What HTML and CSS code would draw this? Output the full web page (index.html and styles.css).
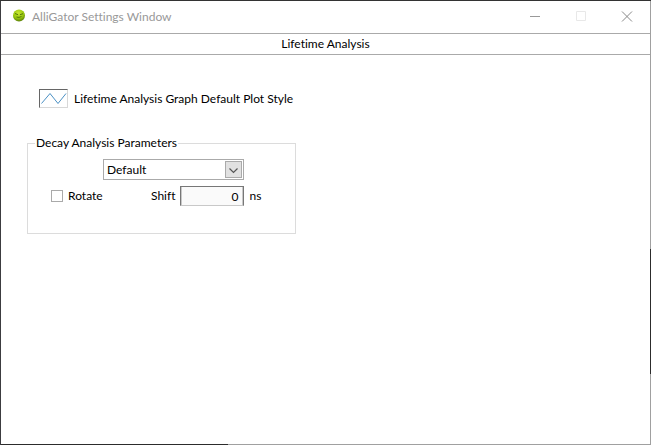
FILE: index.html
```html
<!DOCTYPE html>
<html lang="en">
<head>
<meta charset="utf-8">
<title>AlliGator Settings Window</title>
<link rel="stylesheet" href="styles.css">
</head>
<body>
<div class="window">
  <header class="titlebar">
    <svg class="app-icon" viewBox="0 0 14 14" aria-hidden="true">
      <defs>
        <radialGradient id="ball" cx="45%" cy="30%" r="70%">
          <stop offset="0" stop-color="#c8e632"/>
          <stop offset="0.6" stop-color="#98c80c"/>
          <stop offset="1" stop-color="#5c800a"/>
        </radialGradient>
      </defs>
      <circle cx="7" cy="6.500" r="6" fill="url(#ball)"/>
      <path d="M3 4.500 6 5.700M8 5.700 11 4.700M4.500 8 Q7 9 9.500 7.500" fill="none" stroke="#4a6c0a" stroke-width="0.900"/>
    </svg>
    <h1 class="title">AlliGator Settings Window</h1>
    <div class="controls">
      <button class="control" type="button" aria-label="Minimize">
        <svg viewBox="0 0 12 12"><path d="M1 5.500H11" stroke="#999"/></svg>
      </button>
      <button class="control" type="button" aria-label="Maximize" disabled>
        <svg viewBox="0 0 12 12"><path d="M1.500 0.500H10.500V9.500H1.500Z" fill="none" stroke="#e8e8e8"/></svg>
      </button>
      <button class="control" type="button" aria-label="Close">
        <svg viewBox="0 0 12 12"><path d="M1 0.500 11 10.500M11 0.500 1 10.500" stroke="#888"/></svg>
      </button>
    </div>
  </header>
  <h2 class="page-title">Lifetime Analysis</h2>
  <main class="content">
    <div class="plot-style">
      <button class="plot-button" id="plot" type="button" aria-label="Plot style">
        <svg viewBox="0 0 27 17"><path d="M1.500 13.500 10 3.500 18 13.500 26 3.500" fill="none" stroke="#4a90c4"/></svg>
      </button>
      <label for="plot">Lifetime Analysis Graph Default Plot Style</label>
    </div>
    <fieldset class="group">
      <legend>Decay Analysis Parameters</legend>
      <div class="select-box">
        <select class="select" aria-label="Decay preset"><option>Default</option></select>
        <span class="arrow"><svg viewBox="0 0 15 15"><path d="M3.500 6.500 7.500 10.500 11.500 6.500" fill="none" stroke="#555" stroke-width="1.200"/></svg></span>
      </div>
      <div class="row">
        <label class="rotate"><input class="check" type="checkbox">Rotate</label>
        <label for="shift">Shift</label>
        <input class="number" id="shift" type="text" value="0">
        <span class="unit">ns</span>
      </div>
    </fieldset>
  </main>
</div>
</body>
</html>
```
FILE: styles.css
```css
* {
  box-sizing: border-box;
}

body {
  margin: 0;
  background: #fff;
  color: #000;
  font: 12px/16px Lato, "Open Sans", sans-serif;
  font-variant-ligatures: none;
}

button,
input,
select {
  margin: 0;
  padding: 0;
  font: inherit;
  color: inherit;
}

/* The frame changes tone along its right and bottom edges. */
.window {
  display: flex;
  flex-direction: column;
  min-height: 100vh;
  padding: 1px;
  background:
    linear-gradient(#333, #333) top / 100% 1px no-repeat,
    linear-gradient(#3c3c40, #3c3c40) left / 1px 100% no-repeat,
    linear-gradient(#a0a0a0 56%, #2c2c2c 56% 84%, #a0a0a0 84%) right / 1px 100% no-repeat,
    linear-gradient(90deg, #2c2c2c 35%, #a0a0a0 35%) bottom / 100% 1px no-repeat,
    #fff;
}

.titlebar {
  display: flex;
  align-items: center;
  height: 33px;
  padding-left: 11px;
  border-bottom: 1px solid #aaa;
}

.app-icon {
  width: 14px;
  height: 14px;
  margin-bottom: 3px;
}

.title {
  margin: 0 0 0 6px;
  color: #999;
  font-size: 12px;
  font-weight: 400;
}

.controls {
  display: flex;
  margin-left: auto;
}

.control {
  display: grid;
  place-items: center;
  width: 46px;
  height: 30px;
  border: 0;
  background: none;
}

.control svg {
  width: 12px;
  height: 12px;
}

.page-title {
  margin: 0;
  border-bottom: 1px solid #aaa;
  font-size: 12px;
  font-weight: 400;
  line-height: 20px;
  text-align: center;
}

.content {
  padding: 34px 26px;
}

.plot-style {
  display: flex;
  align-items: center;
  gap: 6px;
  margin-left: 12px;
}

.plot-button {
  width: 29px;
  height: 19px;
  border: 1px solid;
  border-color: #666 #d8d8d8 #d8d8d8 #666;
  background: #fff;
}

.plot-button svg {
  display: block;
  width: 27px;
  height: 17px;
}

.group {
  width: 269px;
  margin: 27px 0 0;
  padding: 8px 0 27px;
  border: 1px solid #dcdcdc;
}

.group legend {
  margin-left: 7px;
  padding: 0 1px;
}

.select-box {
  position: relative;
  width: 141px;
  margin-left: 75px;
}

.select {
  display: block;
  appearance: none;
  width: 100%;
  height: 21px;
  padding-left: 3px;
  border: 1px solid #aaa;
  border-radius: 0;
  background: #fff;
}

.arrow {
  position: absolute;
  top: 2px;
  right: 2px;
  width: 17px;
  height: 17px;
  border: 1px solid #aaa;
  background: #e1e1e1;
  pointer-events: none;
}

.arrow svg {
  display: block;
}

.row {
  display: flex;
  align-items: center;
  margin: 6px 0 0 23px;
}

.rotate {
  display: flex;
  align-items: center;
  gap: 5px;
  width: 100px;
}

.check {
  appearance: none;
  width: 12px;
  height: 12px;
  border: 1px solid #aaa;
  background: #fff;
}

.number {
  width: 64px;
  height: 20px;
  margin-left: 4px;
  padding-right: 4px;
  border: 1px solid #777;
  border-bottom-color: #c8c8c8;
  border-radius: 0;
  background: #fafafa;
  box-shadow: inset 1px 0 #c8c8c8, inset -1px 0 #c8c8c8;
  text-align: right;
}

.unit {
  margin-left: 6px;
}
```
